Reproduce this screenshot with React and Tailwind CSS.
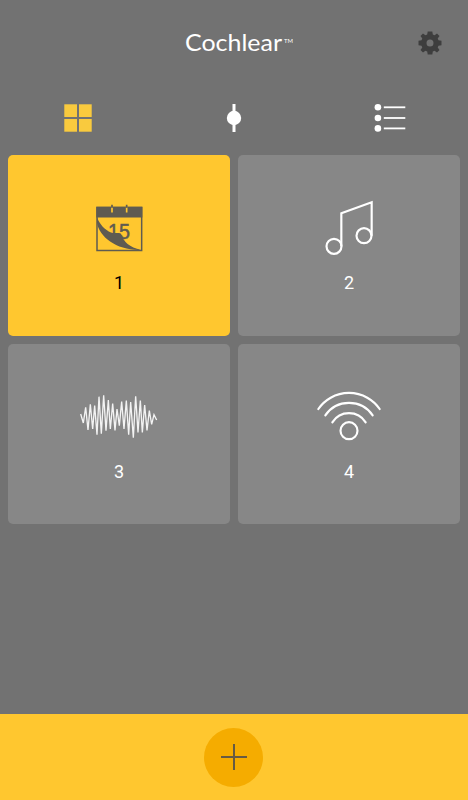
import React from "react";
import clsx from "clsx";

const CalendarIcon = () => (
  <svg className="w-20 h-16" viewBox="-18 1.5 240 192" fill="none">
    <text
      x="69"
      y="132"
      fontSize="65"
      textLength="66"
      lengthAdjust="spacingAndGlyphs"
      fill="#5f5b51"
      stroke="#5f5b51"
      strokeWidth="1.500"
      fontFamily="Liberation Sans, sans-serif"
    >
      15
    </text>
    <path d="M36 72C55 122 90 150 165 166H36Z" fill="#ffc72f" />
    <path
      d="M36 68C44 90 60 106 78 114C90 118 104 112 108 118C115 142 134 159 168 166C98 169 42 128 36 84Z"
      fill="#5f5b51"
    />
    <rect x="36" y="39" width="134" height="129" stroke="#5f5b51" strokeWidth="4.5" />
    <path d="M34 37H172V69H34Z" fill="#5f5b51" />
    <path d="M81 38V54M125 38V54" stroke="#ffc72f" strokeWidth="5" />
    <path d="M81 31V40M125 31V40" stroke="#5f5b51" strokeWidth="5" />
  </svg>
);

const MusicIcon = () => (
  <svg className="w-20 h-16" viewBox="-3 15 240 192" fill="none" stroke="#fff" strokeWidth="6.5">
    <circle cx="72" cy="169" r="22.500" />
    <circle cx="162" cy="137" r="22.500" />
    <path d="M94 169V70L185 37V137" />
  </svg>
);

const WaveIcon = () => (
  <svg
    className="w-20 h-16"
    viewBox="27 -3 240 192"
    fill="none"
    stroke="#fff"
    strokeWidth="4"
    strokeOpacity="0.9"
  >
    <path d="M32 87L40 114L47 67L54 135L61 58L68 132L74 62L81 149L87 35L94 146L101 31L108 137L115 45L121 132L128 56L135 136L141 72L148 122L155 50L162 132L169 47L176 149L182 51L190 158L197 34L204 142L211 47L217 142L224 60L231 136L238 77L245 118L252 89L260 105" />
  </svg>
);

const SignalIcon = () => (
  <svg
    className="w-20 h-16"
    viewBox="12 12 240 192"
    fill="none"
    stroke="#fff"
    strokeWidth="6.5"
    strokeLinecap="round"
  >
    <circle cx="132" cy="152" r="25.500" />
    <path d="M82 127A59 59 0 0 1 182 127" />
    <path d="M61 106A86 86 0 0 1 203 106" />
    <path d="M40 87A112 112 0 0 1 224 87" />
  </svg>
);

const GearIcon = () => (
  <svg className="w-6 h-6" viewBox="0 0 24 24" fill="#3e3e3e">
    <path
      fillRule="evenodd"
      d="M9.700 .5h4.600l.5 3 1.800.8L19 2.500 21.500 5l-1.800 2.400.8 1.800 3 .5v4.600l-3 .5-.8 1.800 1.800 2.400-2.500 2.500-2.400-1.800-1.800.8-.5 3H9.700l-.5-3-1.800-.8L5 21.500 2.500 19l1.800-2.400-.8-1.800-3-.5V9.700l3-.5.8-1.800L2.500 5 5 2.500l2.400 1.800 1.800-.8ZM12 8.500a3.500 3.500 0 1 0 0 7a3.500 3.500 0 1 0 0-7Z"
    />
  </svg>
);

const GridIcon = () => (
  <svg className="w-7 h-7" viewBox="0 0 28 28" fill="#f9ca3e">
    <rect x="0.300" y="0.300" width="12.700" height="12.700" />
    <rect x="15" y="0.300" width="12.700" height="12.700" />
    <rect x="0.300" y="15" width="12.700" height="12.700" />
    <rect x="15" y="15" width="12.700" height="12.700" />
  </svg>
);

const SliderIcon = () => (
  <svg className="w-7 h-7" viewBox="0 0 28 28" fill="#fff">
    <rect x="12.500" y="0" width="3" height="28" />
    <circle cx="14" cy="14" r="7.200" />
  </svg>
);

const ListIcon = () => (
  <svg className="w-8 h-7" viewBox="0 0 32 28" fill="#fff">
    {[3.3, 14, 24.4].map((y) => (
      <g key={y}>
        <circle cx="3.900" cy={y} r="3.300" />
        <rect x="9.800" y={y - 0.9} width="21.500" height="1.800" />
      </g>
    ))}
  </svg>
);

const programs = [
  { id: 1, Icon: CalendarIcon, active: true },
  { id: 2, Icon: MusicIcon },
  { id: 3, Icon: WaveIcon },
  { id: 4, Icon: SignalIcon },
];

const ProgramCard = ({ id, Icon, active }) => (
  <button
    className={clsx(
      "flex flex-col items-center gap-3 pt-10 rounded-[5px]",
      active ? "bg-[#ffc72f] text-black" : "bg-[#878787] text-white"
    )}
  >
    <Icon />
    <span className="text-[18px] leading-6">{id}</span>
  </button>
);

const App = () => {
  return (
    <div className="flex flex-col w-[468px] h-[800px] bg-[#727272] font-['Roboto',sans-serif]">
      <header className="grid grid-cols-[1fr_auto_1fr] items-center h-[86px] px-[26px]">
        <span />
        <svg className="w-[118px] h-8" viewBox="0 0 118 32" fill="#fff">
          <text
            x="10"
            y="23.500"
            fontSize="23.500"
            textLength="97"
            lengthAdjust="spacingAndGlyphs"
            fontFamily="Lato, sans-serif"
          >
            Cochlear
          </text>
          <text
            x="109"
            y="16"
            fontSize="6.500"
            textLength="9"
            lengthAdjust="spacingAndGlyphs"
            fontFamily="Lato, sans-serif"
          >
            TM
          </text>
        </svg>
        <button className="justify-self-end">
          <GearIcon />
        </button>
      </header>

      <nav className="grid grid-cols-3 place-items-center h-16">
        <GridIcon />
        <SliderIcon />
        <ListIcon />
      </nav>

      <main className="flex-1 px-2 pt-[5px]">
        <div className="grid grid-cols-2 grid-rows-[181px_180px] gap-2">
          {programs.map((program) => (
            <ProgramCard key={program.id} {...program} />
          ))}
        </div>
      </main>

      <footer className="flex items-center justify-center h-[86px] pr-px bg-[#ffc72f]">
        <button className="flex items-center justify-center w-[59px] h-[59px] rounded-full bg-[#f5ac00]">
          <svg className="w-[26px] h-[26px]" viewBox="0 0 26 26" stroke="#665a43" strokeWidth="2">
            <path d="M13 0V26M0 13H26" />
          </svg>
        </button>
      </footer>
    </div>
  );
};

export default App;
